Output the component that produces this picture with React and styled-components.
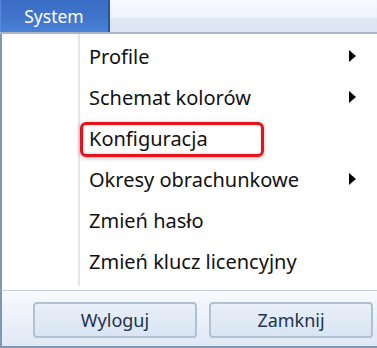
import React from "react";
import styled, { createGlobalStyle } from "styled-components";

const Global = createGlobalStyle`
  html, body { margin: 0; padding: 0; background: #fff; }
  body { font-family: "Noto Sans", "Open Sans", sans-serif; }
`;

const items = [
  { label: "Profile", sub: true },
  { label: "Schemat kolorów", sub: true },
  { label: "Konfiguracja", marked: true },
  { label: "Okresy obrachunkowe", sub: true },
  { label: "Zmień hasło" },
  { label: "Zmień klucz licencyjny" },
];

const App = () => {
  return (
    <>
      <Global />
      <Frame>
        <TopBar>
          <Tab>System</Tab>
        </TopBar>
        <Menu>
          <Gutter />
          <List>
            {items.map((it) => (
              <Item key={it.label} $marked={it.marked}>
                <Label>{it.label}</Label>
                {it.sub && <Arrow />}
              </Item>
            ))}
          </List>
        </Menu>
        <Footer>
          <Button>Wyloguj</Button>
          <Button>Zamknij</Button>
        </Footer>
      </Frame>
    </>
  );
};

export default App;

const Frame = styled.div`
  width: 377px;
  height: 348px;
  display: flex;
  flex-direction: column;
  overflow: hidden;
`;

const TopBar = styled.div`
  height: 32px;
  display: flex;
  background: linear-gradient(#f6f9fd 0%, #eef3fa 55%, #dfe7f3 56%, #dce5f2 100%);
  border-bottom: 2px solid #a9b5c5;
`;

const Tab = styled.div`
  width: 108px;
  display: flex;
  align-items: center;
  justify-content: center;
  color: #fff;
  font-size: 17.5px;
  padding-bottom: 1px;
  background: linear-gradient(#3a6cc4 0%, #3f74ca 50%, #4a82d6 100%);
  border-right: 2px solid #2554ab;
  box-shadow: inset 1px 0 0 #5a8ad6;
`;

const Menu = styled.div`
  flex: 1;
  display: flex;
  background: #fff;
  border-left: 2px solid #7f96b5;
`;

const Gutter = styled.div`
  width: 76px;
  border-right: 2px solid #e4e5ea;
  margin-bottom: 4px;
`;

const List = styled.div`
  flex: 1;
  display: flex;
  flex-direction: column;
  padding-top: 2px;
`;

const Item = styled.div`
  height: 41px;
  display: flex;
  align-items: center;
  padding-left: 9px;
  padding-right: 21px;
  position: relative;
  &::after {
    content: "";
    display: ${(p) => (p.$marked ? "block" : "none")};
    position: absolute;
    left: 0;
    top: 4px;
    width: 184px;
    height: 35px;
    box-sizing: border-box;
    border: 3px solid #e8121b;
    border-radius: 6px;
    box-shadow: 0 1px 4px rgba(0, 0, 0, 0.3), inset 0 0 3px rgba(0, 0, 0, 0.2);
  }
`;

const Label = styled.span`
  font-size: 20px;
  color: #111;
  flex: 1;
  line-height: 1;
`;

const Arrow = styled.span`
  width: 0;
  height: 0;
  border-top: 6px solid transparent;
  border-bottom: 6px solid transparent;
  border-left: 7px solid #000;
  margin-top: -2px;
`;

const Footer = styled.div`
  height: 58px;
  display: flex;
  align-items: center;
  gap: 12px;
  padding-left: 31px;
  padding-top: 2px;
  box-sizing: border-box;
  background: linear-gradient(#f8fafd, #dfe8f5);
  border-top: 1px solid #c6d0de;
  border-left: 2px solid #7f96b5;
  border-bottom: 2px solid #7f96b5;
`;

const Button = styled.div`
  width: 164px;
  height: 36px;
  box-sizing: border-box;
  display: flex;
  align-items: center;
  justify-content: center;
  font-size: 18px;
  color: #22324a;
  border: 2px solid #b3c0d2;
  border-radius: 4px;
  background: linear-gradient(#e8eff9, #d9e5f3);
  flex-shrink: 0;
`;
